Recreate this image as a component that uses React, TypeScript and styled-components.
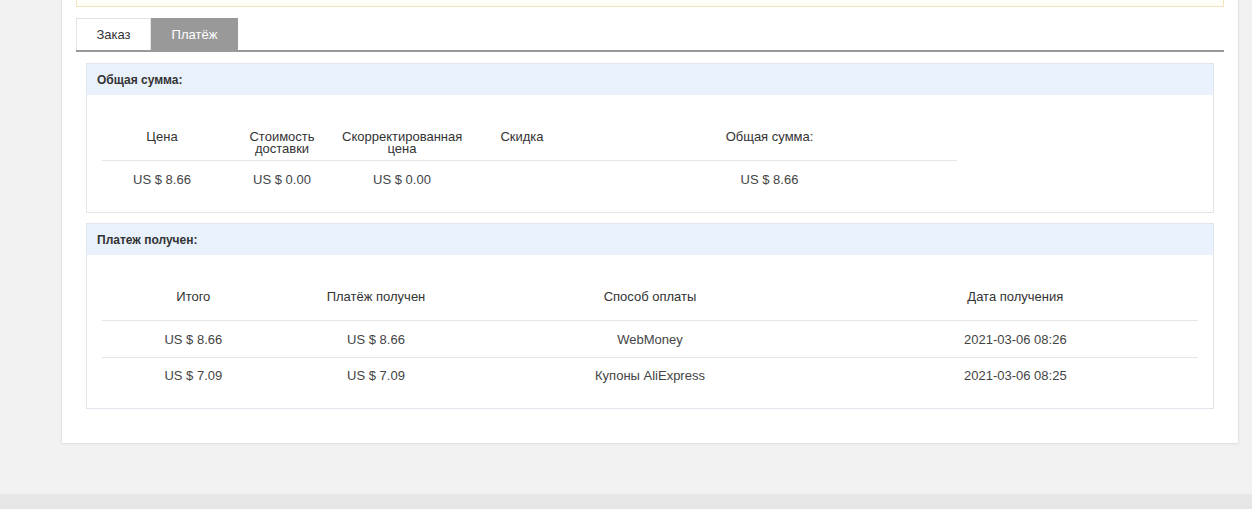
import styled, { createGlobalStyle } from 'styled-components';

const GlobalStyle = createGlobalStyle`
  html, body {
    margin: 0;
    padding: 0;
    background: #f2f2f2;
    font-family: "Liberation Sans", Arial, sans-serif;
    color: #333;
  }
`;

const Page = styled.div`
  min-height: 509px;
  display: flex;
  flex-direction: column;
`;

const Main = styled.div`
  padding: 0 13px 0 61px;
`;

const Container = styled.div`
  background: #fff;
  border: 1px solid #e3e3e3;
  border-top: none;
  box-shadow: 0 1px 2px rgba(0, 0, 0, 0.04);
  padding: 0 14px 34px;
`;

const Notice = styled.div`
  height: 6px;
  background: #fffef8;
  border: 1px solid #efe4bb;
  border-top: none;
  margin-bottom: 11px;
`;

const Tabs = styled.div`
  display: flex;
  border-bottom: 2px solid #999;
`;

const Tab = styled.div<{ $active?: boolean }>`
  height: 32px;
  padding: 0 20px;
  display: flex;
  align-items: center;
  justify-content: center;
  font-size: 13px;
  color: ${(p) => (p.$active ? '#fff' : '#333')};
  background: ${(p) => (p.$active ? '#999' : '#fff')};
  border: ${(p) => (p.$active ? 'none' : '1px solid #e2e2e2')};
  border-bottom: none;
  box-sizing: border-box;
  width: ${(p) => (p.$active ? '87px' : '75px')};
`;

const Section = styled.div`
  margin: 10px 10px 0;
  border: 1px solid #e0e6eb;

  &:first-of-type {
    margin-top: 11px;
  }
`;

const SectionHead = styled.div`
  height: 31px;
  background: #e9f1fc;
  display: flex;
  align-items: center;
  padding-left: 10px;
  font-size: 12px;
  font-weight: bold;
  color: #333;
`;

const SectionBody = styled.div`
  padding: 16px 15px 15px;
`;

const Grid = styled.div<{ $cols: string; $width?: string }>`
  display: grid;
  grid-template-columns: ${(p) => p.$cols};
  width: ${(p) => p.$width || '100%'};
`;

const HeadCell = styled.div`
  height: 50px;
  box-sizing: border-box;
  padding-top: 20px;
  text-align: center;
  font-size: 13px;
  line-height: 12px;
  color: #333;
  border-bottom: 1px solid #e3e7ea;
`;

const Cell = styled.div<{ $line?: boolean }>`
  height: 36px;
  display: flex;
  align-items: center;
  justify-content: center;
  font-size: 13px;
  color: #444;
  border-top: ${(p) => (p.$line ? '1px solid #e3e7ea' : 'none')};
  box-sizing: border-box;
`;

const Footer = styled.div`
  margin-top: 50px;
  flex: 1;
  background: #e6e6e6;
`;

const totals = {
  heads: [['Цена'], ['Стоимость', 'доставки'], ['Скорректированная', 'цена'], ['Скидка'], ['Общая сумма:']],
  row: ['US $ 8.66', 'US $ 0.00', 'US $ 0.00', '', 'US $ 8.66'],
};

const payments = {
  heads: ['Итого', 'Платёж получен', 'Способ оплаты', 'Дата получения'],
  rows: [
    ['US $ 8.66', 'US $ 8.66', 'WebMoney', '2021-03-06 08:26'],
    ['US $ 7.09', 'US $ 7.09', 'Купоны AliExpress', '2021-03-06 08:25'],
  ],
};

export default function App() {
  return (
    <Page>
      <GlobalStyle />
      <Main>
        <Container>
          <Notice />
          <Tabs>
            <Tab>Заказ</Tab>
            <Tab $active>Платёж</Tab>
          </Tabs>

          <div>
            <Section>
              <SectionHead>Общая сумма:</SectionHead>
              <SectionBody>
                <Grid $cols="120px 120px 120px 120px 375px" $width="855px">
                  {totals.heads.map((lines, i) => (
                    <HeadCell key={i}>
                      {lines.map((l, j) => (
                        <div key={j}>{l}</div>
                      ))}
                    </HeadCell>
                  ))}
                  {totals.row.map((v, i) => (
                    <Cell key={i}>{v}</Cell>
                  ))}
                </Grid>
              </SectionBody>
            </Section>

            <Section>
              <SectionHead>Платеж получен:</SectionHead>
              <SectionBody>
                <Grid $cols="1fr 1fr 2fr 2fr">
                  {payments.heads.map((h) => (
                    <HeadCell key={h}>{h}</HeadCell>
                  ))}
                  {payments.rows.map((r, ri) =>
                    r.map((v, ci) => (
                      <Cell key={`${ri}-${ci}`} $line={ri > 0}>
                        {v}
                      </Cell>
                    ))
                  )}
                </Grid>
              </SectionBody>
            </Section>
          </div>
        </Container>
      </Main>
      <Footer />
    </Page>
  );
}
